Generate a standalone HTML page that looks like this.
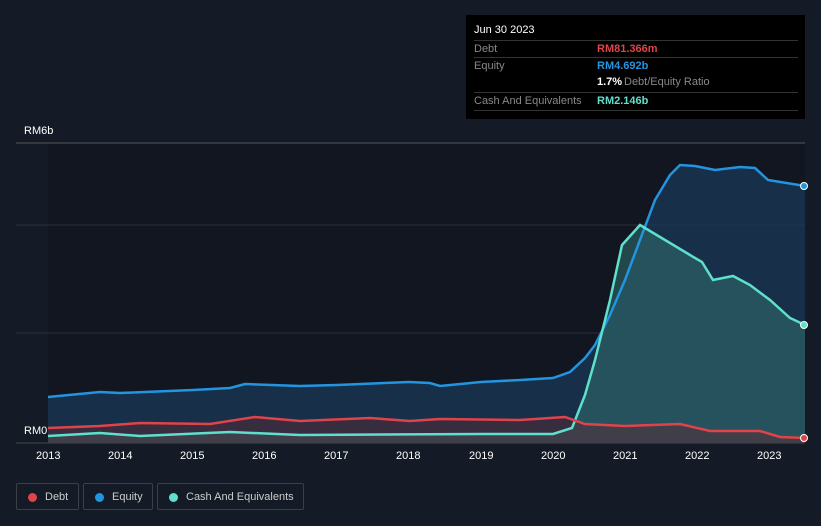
<!DOCTYPE html><html><head><style>
body{margin:0;width:821px;height:526px;background:#151b26;font-family:"Liberation Sans",sans-serif;overflow:hidden;position:relative}
.t{position:absolute;font-size:11px;color:#fff}
.tip{position:absolute;left:466px;top:15px;width:339px;height:104px;background:#000;font-size:11px}
.row{position:absolute;left:8px;width:324px;border-top:1px solid #333;height:17px;line-height:17px;color:#888}
.leg{position:absolute;top:483px;height:27px;border:1px solid #3a3f4a;border-radius:2px;color:#ccc;font-size:11px;line-height:27px;box-sizing:border-box}
.leg i{position:absolute;left:11px;top:9px;width:9px;height:9px;border-radius:50%}
</style></head><body>
<svg width="821" height="526" style="position:absolute;left:0;top:0">
<rect x="48" y="143" width="757" height="300" fill="#111620"/>
<line x1="16" y1="143" x2="805" y2="143" stroke="#555" stroke-width="1"/>
<line x1="16" y1="225" x2="805" y2="225" stroke="#2a2f3a"/>
<line x1="16" y1="333" x2="805" y2="333" stroke="#2a2f3a"/>
<line x1="16" y1="443" x2="805" y2="443" stroke="#444"/>
<path d="M48,397 L100,392 L120,393 L193,390 L230,388 L245,384 L300,386 L337,385 L409,382 L430,383 L440,386 L481,382 L520,380 L553,378 L570,372 L585,358 L595,345 L610,315 L625,280 L640,240 L655,200 L670,175 L680,165 L695,166 L715,170 L740,167 L755,168 L768,180 L805,186 L805,443 L48,443Z" fill="#1a3a5a" fill-opacity="0.7"/>
<path d="M48,436 L100,433 L140,436 L230,432 L300,435 L480,434 L553,434 L572,428 L585,395 L595,360 L610,300 L622,245 L640,225 L665,240 L690,255 L702,262 L713,280 L733,276 L750,285 L770,300 L790,318 L805,325 L805,443 L48,443Z" fill="#2e6b6a" fill-opacity="0.6"/>
<path d="M48,428 L100,426 L140,423 L210,424 L255,417 L300,421 L370,418 L410,421 L440,419 L520,420 L565,417 L585,424 L625,426 L680,424 L710,431 L760,431 L780,437 L805,438 L805,443 L48,443Z" fill="#5a2a35" fill-opacity="0.5"/>
<path d="M48,397 L100,392 L120,393 L193,390 L230,388 L245,384 L300,386 L337,385 L409,382 L430,383 L440,386 L481,382 L520,380 L553,378 L570,372 L585,358 L595,345 L610,315 L625,280 L640,240 L655,200 L670,175 L680,165 L695,166 L715,170 L740,167 L755,168 L768,180 L805,186" fill="none" stroke="#2394e0" stroke-width="2.5"/>
<path d="M48,436 L100,433 L140,436 L230,432 L300,435 L480,434 L553,434 L572,428 L585,395 L595,360 L610,300 L622,245 L640,225 L665,240 L690,255 L702,262 L713,280 L733,276 L750,285 L770,300 L790,318 L805,325" fill="none" stroke="#5ee0cc" stroke-width="2.5"/>
<path d="M48,428 L100,426 L140,423 L210,424 L255,417 L300,421 L370,418 L410,421 L440,419 L520,420 L565,417 L585,424 L625,426 L680,424 L710,431 L760,431 L780,437 L805,438" fill="none" stroke="#e0434a" stroke-width="2.5"/>
<circle cx="804" cy="186" r="3.5" fill="#2394e0" stroke="#fff"/>
<circle cx="804" cy="325" r="3.5" fill="#5ee0cc" stroke="#fff"/>
<circle cx="804" cy="438" r="3.5" fill="#e0434a" stroke="#fff"/>
</svg>
<div class="t" style="left:24px;top:125px">RM6b</div>
<div class="t" style="left:24px;top:425px">RM0</div>
<div class="t" style="left:36px;top:450px">2013</div><div class="t" style="left:108px;top:450px">2014</div><div class="t" style="left:180px;top:450px">2015</div><div class="t" style="left:252px;top:450px">2016</div><div class="t" style="left:324px;top:450px">2017</div><div class="t" style="left:396px;top:450px">2018</div><div class="t" style="left:469px;top:450px">2019</div><div class="t" style="left:541px;top:450px">2020</div><div class="t" style="left:613px;top:450px">2021</div><div class="t" style="left:685px;top:450px">2022</div><div class="t" style="left:757px;top:450px">2023</div>
<div class="tip">
<div style="position:absolute;left:8px;top:9px;color:#fff">Jun 30 2023</div>
<div class="row" style="top:25px">Debt<span style="position:absolute;left:123px;color:#e0434a;font-weight:bold">RM81.366m</span></div>
<div class="row" style="top:42px">Equity<span style="position:absolute;left:123px;color:#2394e0;font-weight:bold">RM4.692b</span></div>
<div class="row" style="top:59px;border:0"><span style="position:absolute;left:123px;color:#fff;font-weight:bold">1.7%</span><span style="position:absolute;left:150px">Debt/Equity Ratio</span></div>
<div class="row" style="top:77px">Cash And Equivalents<span style="position:absolute;left:123px;color:#5ee0cc;font-weight:bold">RM2.146b</span></div>
<div class="row" style="top:95px"></div>
</div>
<div class="leg" style="left:16px;width:63px"><i style="background:#e0434a"></i><span style="margin-left:28px">Debt</span></div>
<div class="leg" style="left:83px;width:70px"><i style="background:#2394e0"></i><span style="margin-left:28px">Equity</span></div>
<div class="leg" style="left:157px;width:147px"><i style="background:#5ee0cc"></i><span style="margin-left:28px">Cash And Equivalents</span></div>
</body></html>
